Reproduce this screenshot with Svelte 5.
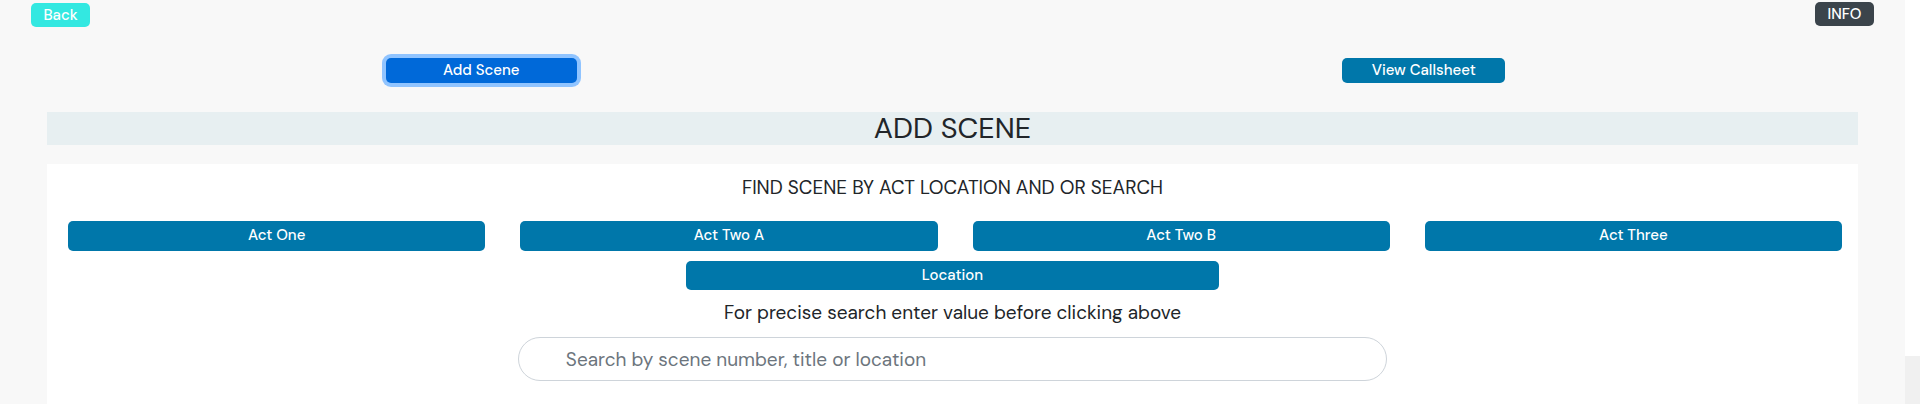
<script>
  const acts = ['Act One', 'Act Two A', 'Act Two B', 'Act Three'];
  let query = $state('');
</script>

<div class="page">
  <main>
    <header>
      <button type="button" class="small back">Back</button>
      <button type="button" class="small info">INFO</button>
    </header>

    <nav>
      <div><button type="button" class="tab active">Add Scene</button></div>
      <div><button type="button" class="tab view">View Callsheet</button></div>
    </nav>

    <div class="content">
      <h1>ADD SCENE</h1>
      <section>
        <h2>FIND SCENE BY ACT LOCATION AND OR SEARCH</h2>
        <div class="acts">
          {#each acts as act}
            <button type="button">{act}</button>
          {/each}
        </div>
        <button type="button" class="location">Location</button>
        <label for="search">For precise search enter value before clicking above</label>
        <input id="search" type="text" placeholder="Search by scene number, title or location" bind:value={query} />
      </section>
    </div>
  </main>
  <div class="track"><div class="rest"></div></div>
</div>

<style>
  :global(body) {
    margin: 0;
    background: #f8f8f8;
  }
  .page {
    display: flex;
    min-height: 100vh;
    font-family: 'DM Sans', Inter, sans-serif;
    color: #212529;
  }
  main {
    flex: 1;
    display: flex;
    flex-direction: column;
  }
  button {
    box-sizing: border-box;
    padding: 0 12px 2px;
    border: 0;
    border-radius: 5px;
    background: #0077aa;
    color: #fff;
    font: 500 15px/20px 'DM Sans', Inter, sans-serif;
    cursor: pointer;
  }
  header {
    display: flex;
    justify-content: space-between;
    align-items: flex-start;
    padding: 2px 31px 0;
  }
  .small {
    min-width: 59px;
    height: 24px;
    padding-bottom: 0;
  }
  .back {
    margin-top: 1px;
    background: #33e8e1;
  }
  .info {
    background: #3b444b;
  }
  nav {
    display: grid;
    grid-template-columns: 1fr 1fr;
    padding: 31px 10px 0;
    text-align: center;
  }
  nav div {
    display: flex;
    justify-content: center;
  }
  .tab {
    height: 25px;
  }
  .active {
    width: 191px;
    background: #0069d9;
    box-shadow: 0 0 0 4px #90c4ff;
  }
  .view {
    width: 163px;
  }
  .content {
    flex: 1;
    display: flex;
    flex-direction: column;
    padding: 29px 47px 0;
  }
  h1 {
    margin: 0 0 19px;
    background: #e7eff1;
    font-size: 29px;
    line-height: 33px;
    font-weight: 400;
    text-align: center;
  }
  section {
    flex: 1;
    display: flex;
    flex-direction: column;
    align-items: center;
    background: #fff;
    padding: 12px 0 23px;
  }
  h2 {
    margin: 0 0 21px;
    font-size: 19px;
    line-height: 24px;
    font-weight: 400;
  }
  .acts {
    align-self: stretch;
    display: grid;
    grid-template-columns: repeat(4, 1fr);
    gap: 35px;
    margin: 0 16px 10px 21px;
  }
  .acts button {
    height: 30px;
  }
  .location {
    width: 29.4%;
    height: 29px;
  }
  label {
    margin: 11px 0 12px;
    font-size: 19px;
    line-height: 24px;
  }
  input {
    box-sizing: border-box;
    width: 48%;
    height: 44px;
    padding: 0 47px;
    border: 1px solid #ced4da;
    border-radius: 22px;
    background: #fff;
    color: #495057;
    font: 400 19px/24px 'DM Sans', Inter, sans-serif;
  }
  input::placeholder {
    color: #6c757d;
    opacity: 1;
  }
  .track {
    width: 15px;
    display: flex;
    flex-direction: column;
    background: #fff;
  }
  .rest {
    margin-top: auto;
    height: 48px;
    background: #f0f0f0;
  }
</style>
